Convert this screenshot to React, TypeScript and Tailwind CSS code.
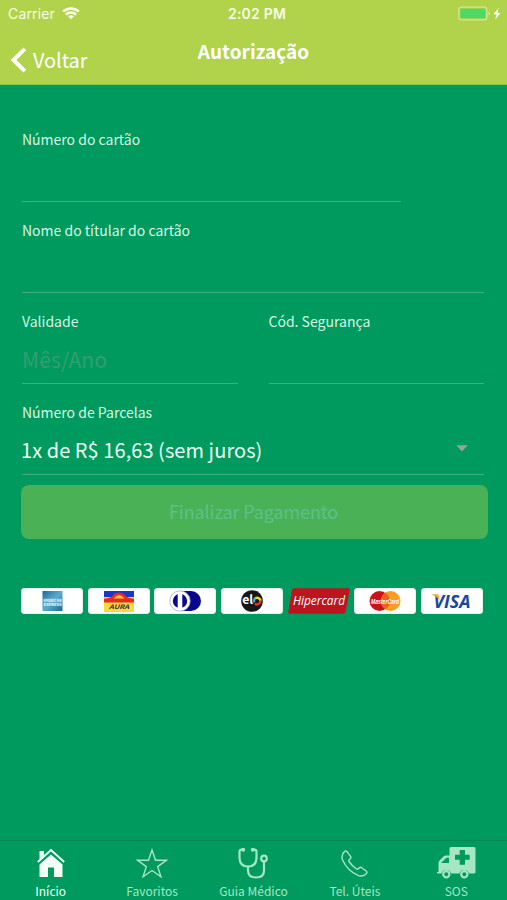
import { ReactNode } from 'react'

interface FieldProps {
  label: string
  className?: string
  children?: ReactNode
}

const Field: React.FC<FieldProps> = ({ label, className = '', children }) => (
  <div className={`flex h-[91px] flex-col border-b border-[#40ae82] pt-[18px] ${className}`}>
    <label className="h-5 whitespace-nowrap text-[14px] leading-5 text-[#d6f7e4]">{label}</label>
    {children}
  </div>
)

const WifiIcon = () => (
  <svg width="18" height="13" viewBox="0 0 18 13" fill="none" stroke="#fbfff0" strokeWidth="2.5">
    <path d="M1.2 4.7a11 11 0 0 1 15.6 0" />
    <path d="M4 7.7a7 7 0 0 1 10 0" />
    <path d="M9 12.3 6.2 9.6a4 4 0 0 1 5.6 0Z" fill="#fbfff0" stroke="none" />
  </svg>
)

const StatusBar = () => (
  <div className="grid h-[27px] grid-cols-3 items-center pl-2 pr-[5px] font-['Inter',sans-serif] text-[14px] text-[#f7fce4]">
    <div className="flex items-center gap-[7px]">
      <span className="tracking-[0.15px]">Carrier</span>
      <WifiIcon />
    </div>
    <span className="pl-1 text-center text-[14px] font-semibold tracking-[0.2px]">2:02 PM</span>
    <svg className="justify-self-end" width="44" height="15" viewBox="0 0 44 15">
      <rect x="0.8" y="1.2" width="28" height="12.6" rx="2.5" fill="none" stroke="#d5e58f" strokeWidth="1.3" />
      <rect x="2.4" y="2.8" width="25" height="9.4" rx="1.2" fill="#4cd964" />
      <path d="M30.6 5.7v3.6q1.4-.6 1.4-1.8t-1.4-1.8Z" fill="#e2edb0" />
      <path d="m40.8 1.8-5.2 6.4h3l-1.4 5.2 5.2-6.5h-3Z" fill="#fff" />
    </svg>
  </div>
)

const Header = () => (
  <header className="h-[85px] border-b border-[#8cc44f] bg-[#b0d34b]">
    <StatusBar />
    <div className="grid grid-cols-3 items-start text-white">
      <button className="flex items-center gap-1.5 pl-2.5 pt-[19px]">
        <svg width="17" height="26" viewBox="0 0 17 26" fill="none" stroke="#fff" strokeWidth="4">
          <path d="M14.8 1.8 3.5 13l11.3 11.2" />
        </svg>
        <span className="text-[20px] leading-7 tracking-[-0.1px]">Voltar</span>
      </button>
      <h1 className="pt-[10px] text-center text-[19px] font-bold leading-7">Autorização</h1>
    </div>
  </header>
)

const AmexLogo = () => (
  <svg width="21" height="20" viewBox="0 0 20 20">
    <defs>
      <linearGradient id="amex" x1="0" y1="0" x2="1" y2="1">
        <stop offset="0" stopColor="#1b6a9b" />
        <stop offset="0.5" stopColor="#59add0" />
        <stop offset="1" stopColor="#186898" />
      </linearGradient>
    </defs>
    <rect width="20" height="20" fill="url(#amex)" />
    <rect y="7" width="20" height="8" fill="#8dc6dc" opacity=".3" />
    <text x="1" y="10.5" fontSize="3.8" fontWeight="700" fill="#e8f6fb" textLength="18" lengthAdjust="spacingAndGlyphs">AMERICAN</text>
    <text x="1" y="14.5" fontSize="3.8" fontWeight="700" fill="#e8f6fb" textLength="18" lengthAdjust="spacingAndGlyphs">EXPRESS</text>
  </svg>
)

const AuraLogo = () => (
  <svg width="30" height="21" viewBox="0 0 30 21">
    <rect width="30" height="21" fill="#ffd63c" />
    <rect width="30" height="6" fill="#1738c8" />
    <path d="M0 11.5V7.8Q8 7 10 3q5-3 10 0 2 4 10 4.8v3.7Z" fill="#e92a24" />
    <path d="M9.5 7.5q5.5-7 11 0Z" fill="#ffc52d" />
    <text x="5" y="18" fontSize="6" fontStyle="italic" fontWeight="700" fill="#25284a" textLength="20" lengthAdjust="spacingAndGlyphs">AURA</text>
  </svg>
)

const DinersLogo = () => (
  <svg width="33" height="22" viewBox="0 0 33 22">
    <path d="M12 1h10a10 10 0 0 1 0 20H12Z" fill="#08088e" />
    <circle cx="11" cy="11" r="10.2" fill="#fff" stroke="#aaaad8" strokeWidth=".8" />
    <circle cx="11" cy="11" r="7.2" fill="#08088e" />
    <rect x="8.7" y="3.5" width="4.6" height="15" fill="#fff" />
  </svg>
)

const EloLogo = () => (
  <svg width="22" height="22" viewBox="0 0 22 22">
    <circle cx="11" cy="11" r="10.8" fill="#171717" />
    <text x="1.2" y="14.2" fontSize="12" fontWeight="700" fill="#fff" textLength="11" lengthAdjust="spacingAndGlyphs">el</text>
    <g fill="none" strokeWidth="2.5">
      <path d="M13.2 12.4a3.6 3.6 0 0 1 1.2-4.2" stroke="#38a7df" />
      <path d="M14.2 8.3a3.6 3.6 0 0 1 5.4 2.5" stroke="#f4d51c" />
      <path d="M19.6 10.8a3.6 3.6 0 0 1-5.8 2.8" stroke="#e43129" />
    </g>
  </svg>
)

const HipercardLogo = () => (
  <svg width="62" height="26" viewBox="0 0 63 26">
    <path d="M6.5 0H61q2 0 1.6 2l-4 21.5q-.5 2.5-3 2.5H2q-2.2 0-1.7-2L4 2q.5-2 2.5-2Z" fill="#bd151e" />
    <text x="5" y="17.2" fontSize="12.5" fontStyle="italic" fontWeight="500" fill="#fff" textLength="53" lengthAdjust="spacingAndGlyphs" fontFamily="Open Sans, sans-serif">Hipercard</text>
  </svg>
)

const MastercardLogo = () => (
  <svg className="overflow-visible" width="34" height="22" viewBox="0 0 34 22">
    <circle cx="22.5" cy="11" r="10" fill="#fb9c20" />
    <circle cx="11.5" cy="11" r="10" fill="#ce1018" />
    <path d="M17 2.7a10 10 0 0 1 0 16.6 10 10 0 0 1 0-16.6Z" fill="#ea6120" />
    <text x="3" y="13.5" fontSize="6.5" fontStyle="italic" fontWeight="700" fill="#fff" textLength="28" lengthAdjust="spacingAndGlyphs" fontFamily="Liberation Sans, sans-serif">MasterCard</text>
  </svg>
)

const VisaLogo = () => (
  <svg className="mr-0.5 overflow-visible" width="42" height="18" viewBox="0 0 42 18">
    <text x="3.5" y="15.5" fontSize="18.5" fontStyle="italic" fontWeight="700" fill="#17479e" textLength="37" lengthAdjust="spacingAndGlyphs" fontFamily="Open Sans, sans-serif">VISA</text>
    <path d="M1 2.2h6.3q1.2.2 1.5 1.5l1 4.5Q7 4.5 1 2.2Z" fill="#eca73c" />
  </svg>
)

const CARDS = [
  { name: 'amex', logo: <AmexLogo /> },
  { name: 'aura', logo: <AuraLogo /> },
  { name: 'diners', logo: <DinersLogo /> },
  { name: 'elo', logo: <EloLogo /> },
  { name: 'hipercard', logo: <HipercardLogo />, bare: true },
  { name: 'mastercard', logo: <MastercardLogo /> },
  { name: 'visa', logo: <VisaLogo /> }
]

const HomeIcon = () => (
  <svg width="28" height="30" viewBox="0 0 28 30" fill="currentColor">
    <path d="M2.5 3H7v6l-4.5 4Z" />
    <path d="m14 6.5 11.5 10V29H17v-9.5h-6V29H2.5V16.5Z" />
    <path d="M.8 14 14 2l13.2 12" fill="none" stroke="currentColor" strokeWidth="1.9" />
  </svg>
)

const StarIcon = () => (
  <svg width="32" height="30" viewBox="0 0 32 30" fill="none" stroke="currentColor" strokeWidth="1.4">
    <path d="m16 2 3.5 10.3h10.8l-8.6 6.3 3.2 10.1-8.9-6.2-8.9 6.2 3.2-10.1-8.6-6.3h10.8Z" />
  </svg>
)

const StethoscopeIcon = () => (
  <svg width="30" height="32" viewBox="0 0 30 32" fill="none" stroke="currentColor" strokeWidth="2.2">
    <path d="M5 2.5H3.5Q1.5 2.5 1.5 5v5.5q0 9 8.5 9t8.500-9V5q0-2.500-2-2.500H15" />
    <path d="M10 19.5v4q0 7 8 7t8-6.500V14.500" />
    <circle cx="26" cy="11.5" r="2.8" />
    <circle cx="5.2" cy="2.7" r="2" fill="currentColor" stroke="none" />
    <circle cx="14.8" cy="2.7" r="2" fill="currentColor" stroke="none" />
  </svg>
)

const PhoneIcon = () => (
  <svg width="27" height="27" viewBox="0 0 27 27" fill="none" stroke="currentColor" strokeWidth="1.4" strokeLinejoin="round">
    <path d="M3.7 1.4Q5 .5 6.2 1.8L9.5 6.3Q10.3 7.6 9.3 8.7L7.9 10.1Q7.5 10.7 8 11.5 11 16 15.5 19 16.4 19.5 17 18.9L18.4 17.7Q19.5 16.9 20.7 17.7L25.2 21Q26.5 22.1 25.5 23.4 22.5 27.2 17.5 25.6 6.5 21.2 1.5 9.8-.2 4.5 3.7 1.4Z" />
  </svg>
)

const AmbulanceIcon = () => (
  <svg width="39" height="32" viewBox="0 0 39 32" fill="currentColor">
    <path
      fillRule="evenodd"
      d="M14 0H37Q38.5 0 38.5 1.5V25Q38.5 26.5 37 26.5H32A5 5 0 0 0 22.5 26.5H14A5 5 0 0 0 4.5 26.5H0V25H1.5V16Q1.5 14.5 2.5 13.5L6.5 9.5Q7.5 8.5 9 8.5H12.5V1.5Q12.5 0 14 0ZM22.7 3V7.8H18V12.8H22.7V17.7H28V12.8H32.7V7.8H28V3ZM9.5 10.8 4 16H12V10.8Z"
    />
    <circle cx="9.3" cy="27.3" r="3.1" fill="none" stroke="currentColor" strokeWidth="2.2" />
    <circle cx="27.3" cy="27.3" r="3.1" fill="none" stroke="currentColor" strokeWidth="2.2" />
  </svg>
)

const TABS = [
  { label: 'Início', icon: <HomeIcon />, active: true },
  { label: 'Favoritos', icon: <StarIcon /> },
  { label: 'Guia Médico', icon: <StethoscopeIcon /> },
  { label: 'Tel. Úteis', icon: <PhoneIcon /> },
  { label: 'SOS', icon: <AmbulanceIcon /> }
]

const TabBar = () => (
  <nav className="grid h-[60px] grid-cols-5 border-t border-[#078653]">
    {TABS.map((tab) => (
      <button
        key={tab.label}
        className={`flex flex-col items-center pt-[3px] ${tab.active ? 'text-[#f4fff8]' : 'text-[#a5e6c3]'}`}
      >
        <span className="flex h-[38px] items-center justify-center">{tab.icon}</span>
        <span className="whitespace-nowrap text-[12px] leading-[18px]">{tab.label}</span>
      </button>
    ))}
  </nav>
)

export default function App() {
  return (
    <div className="flex h-[900px] w-[507px] flex-col overflow-hidden bg-[#009a5e] font-['Noto_Sans_CJK_SC',sans-serif]">
      <Header />

      <main className="flex-1 pl-[22px] pr-[23px] pt-[26px]">
        <Field label="Número do cartão" className="mr-[83px]" />
        <Field label="Nome do títular do cartão" />
        <div className="grid grid-cols-2 gap-[31px]">
          <Field label="Validade">
            <span className="pt-[13px] text-[21px] leading-[30px] tracking-[0.15px] text-[#349e71]">Mês/Ano</span>
          </Field>
          <Field label="Cód. Segurança" />
        </div>
        <Field label="Número de Parcelas">
          <div className="-ml-px flex items-center justify-between pr-4 pt-[13px] text-[20px] leading-[30px] text-[#effff5]">
            <span className="tracking-[0.06px]">1x de R$ 16,63 (sem juros)</span>
            <svg className="mb-1" width="12" height="7" viewBox="0 0 12 7">
              <path d="M.3.2h11.4L6 6.5Z" fill="#93a59a" />
            </svg>
          </div>
        </Field>

        <button className="-ml-px mt-[10px] flex h-[54px] w-[467px] items-center justify-center rounded-lg bg-[#4ab157] text-[18px] text-[#5cc18a]">
          <span className="-ml-0.5 -mt-px tracking-[-0.1px]">Finalizar Pagamento</span>
        </button>

        <div className="-ml-px mt-[49px] flex w-[462px] justify-between">
          {CARDS.map((card) => (
            <div
              key={card.name}
              className={`flex h-[26px] w-[62px] items-center justify-center rounded-[3px] ${card.bare ? '' : 'border border-[#e4f0e9] bg-white'}`}
            >
              {card.logo}
            </div>
          ))}
        </div>
      </main>

      <TabBar />
    </div>
  )
}
